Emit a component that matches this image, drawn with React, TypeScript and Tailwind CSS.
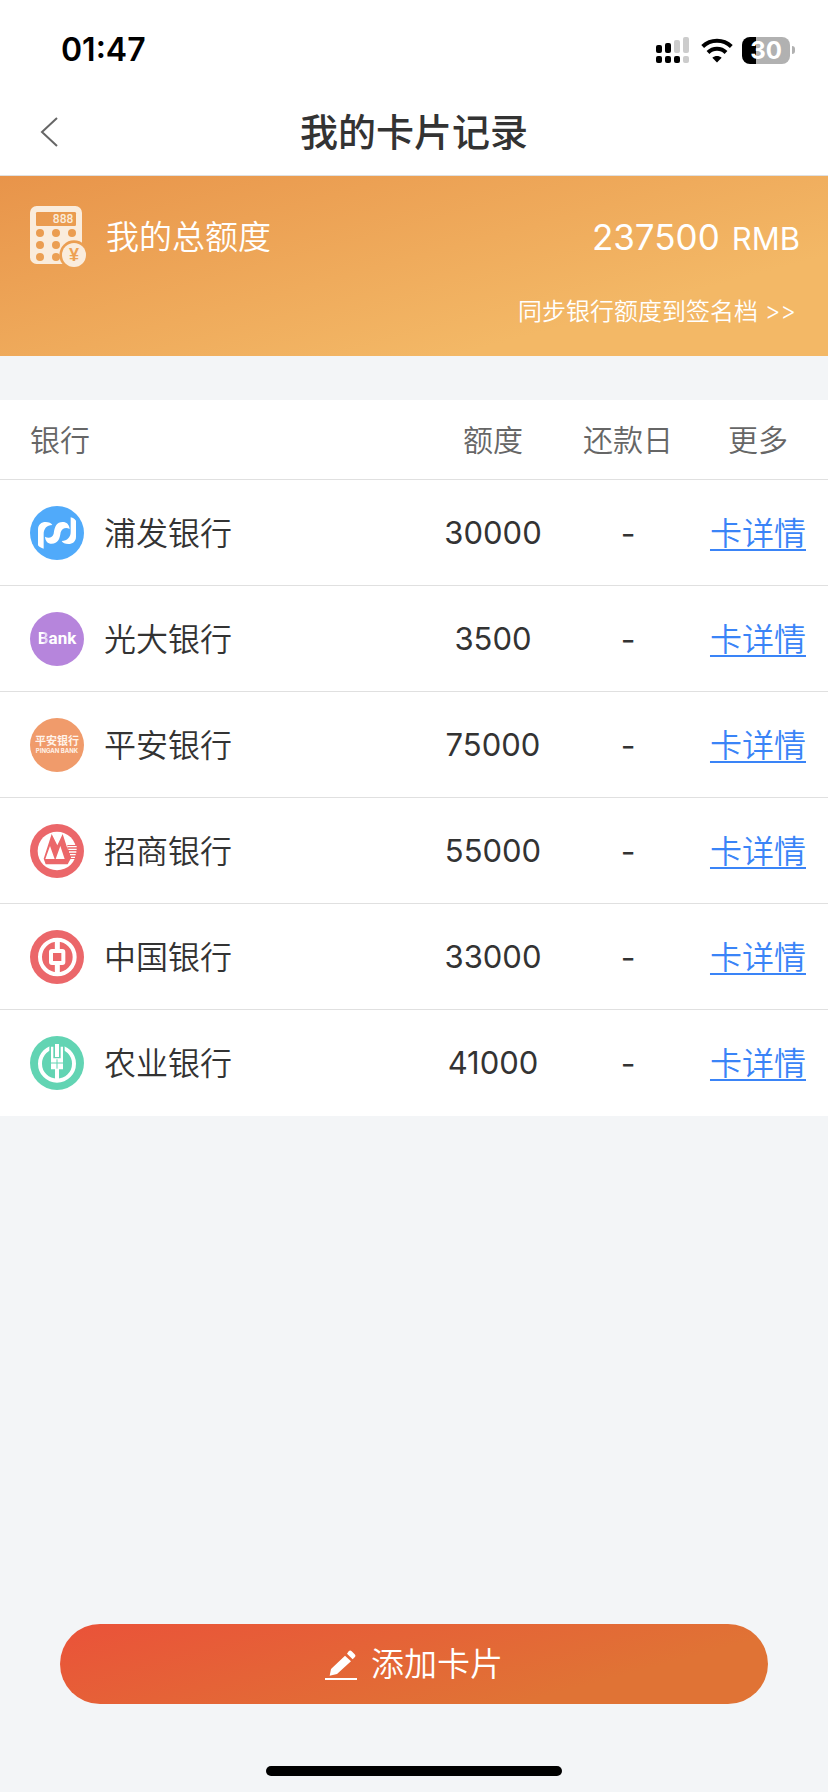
import { ReactNode } from "react";
import { twMerge } from "tailwind-merge";

interface Card {
    name: string;
    amount: number;
    payDay?: string;
    logo: ReactNode;
}

interface LogoProps {
    className: string;
    children: ReactNode;
}

function Logo({ className, children }: LogoProps) {
    return (
        <svg viewBox="0 0 162 162" className={twMerge("size-[54px] rounded-full shrink-0", className)} aria-hidden="true">
            {children}
        </svg>
    );
}

function SpdLogo() {
    return (
        <Logo className="bg-[#50aafa]">
            <g fill="#fff">
                <path d="M24 118V70c0-14 10-22 23-22 10 0 17 3 20 9-17 1-26 11-26 27v44c-8-2-13-5-17-10Z" />
                <path d="M45 92c10 6 23 3 26-9 3-22 9-35 27-35 12 0 20 8 21 21-10-6-23-3-27 10-3 21-8 34-27 34-12 0-19-8-20-21Z" />
                <path d="M138 44v48c0 14-10 22-23 22-10 0-17-3-20-9 17-1 27-11 27-27V34c8 2 12 5 16 10Z" />
            </g>
        </Logo>
    );
}

function EverbrightLogo() {
    return (
        <span className="flex size-[54px] shrink-0 items-center justify-center rounded-full bg-[#b685dc] font-[Roboto,sans-serif] text-[17px] leading-none font-bold text-white">
            <span className="bg-linear-to-r from-white from-40% to-white/40 bg-clip-text text-transparent">B</span>ank
        </span>
    );
}

function PinganLogo() {
    return (
        <span className="flex size-[54px] shrink-0 flex-col items-center justify-center rounded-full bg-[#f09b6b] font-bold whitespace-nowrap text-[#fff3ea]">
            <span className="text-[11px] leading-[12px]">平安银行</span>
            <span className="text-[6px] leading-[8px]">PINGAN BANK</span>
        </span>
    );
}

function MerchantsLogo() {
    return (
        <Logo className="bg-[#eb676a]">
            <circle cx="81" cy="81" r="58" fill="#fff" />
            <path fill="#eb676a" d="M112 63h32v42h-32z" />
            <path fill="#eb676a" d="M65 30 82 64 98 30l24 74-9 17H47l-6-17Z" />
            <path fill="#fff" d="M60 66 74 105H46ZM91 66l13 39H77ZM112 66h28v4h-28zM115 74h25v4h-25zM117 82h22v4h-22zM120 90h17v4h-17zM123 98h12v4h-12z" />
            <path stroke="#eb676a" strokeWidth="3" d="M44 107h74" />
        </Logo>
    );
}

function ChinaLogo() {
    return (
        <Logo className="bg-[#eb676a]">
            <g fill="none" stroke="#fff">
                <circle cx="82" cy="81" r="52" strokeWidth="12" />
                <rect x="63" y="63" width="37" height="36" rx="3" strokeWidth="12" />
                <path strokeWidth="15" d="M82 26v32M82 104v32" />
            </g>
        </Logo>
    );
}

function AgriculturalLogo() {
    return (
        <Logo className="bg-[#62d4b3]">
            <circle cx="81" cy="83" r="51" fill="none" stroke="#fff" strokeWidth="12" />
            <path fill="#62d4b3" d="M58 18h46v40H58z" />
            <path fill="#fff" d="M75 24h12v39H75zM63 32h7v35h22V32h7v68H63zM75 100h12v36H75z" />
            <path stroke="#62d4b3" strokeWidth="3" d="M62 81h38M81 70v28" />
        </Logo>
    );
}

const cards: Card[] = [
    { name: "浦发银行", amount: 30000, logo: <SpdLogo /> },
    { name: "光大银行", amount: 3500, logo: <EverbrightLogo /> },
    { name: "平安银行", amount: 75000, logo: <PinganLogo /> },
    { name: "招商银行", amount: 55000, logo: <MerchantsLogo /> },
    { name: "中国银行", amount: 33000, logo: <ChinaLogo /> },
    { name: "农业银行", amount: 41000, logo: <AgriculturalLogo /> },
];

function StatusBar() {
    return (
        <div className="flex h-[88px] items-center justify-between pt-3 pr-[33px] pl-[61px] text-black">
            <span className="text-[32px] leading-none font-semibold">01:47</span>
            <div className="flex items-center gap-3">
                <svg viewBox="0 0 33 27" className="h-[27px] w-[33px]" aria-hidden="true">
                    <rect x="0" y="8" width="6" height="8" rx="2" />
                    <rect x="9" y="6" width="6" height="10" rx="2" />
                    <rect x="18" y="3" width="6" height="13" rx="2" fill="#ccc" />
                    <rect x="27" y="0" width="6" height="16" rx="2" fill="#ccc" />
                    <rect x="0" y="19" width="6" height="7" rx="2" />
                    <rect x="9" y="19" width="6" height="7" rx="2" />
                    <rect x="18" y="19" width="6" height="7" rx="2" />
                    <rect x="27" y="19" width="6" height="7" rx="2" fill="#ccc" />
                </svg>
                <svg viewBox="0 0 96 74" className="h-[25px] w-8" aria-hidden="true">
                    <g fill="none" stroke="#000" strokeWidth="12">
                        <path d="M5 25C29 2 67 2 91 25" />
                        <path d="M21 43c15-15 39-15 54 0" />
                    </g>
                    <path d="M48 73 34 59c8-7 20-7 28 0Z" />
                </svg>
                <div className="-ml-[3px] flex items-center gap-[2px]">
                    <span className="flex h-[27px] w-12 items-center justify-center rounded-lg bg-linear-to-r from-black from-30% to-[#b1b1b1] to-30% text-[24px] leading-[27px] font-bold text-white">30</span>
                    <span className="h-2 w-[3px] rounded-r-full bg-[#b1b1b1]" />
                </div>
            </div>
        </div>
    );
}

function CalculatorIcon() {
    return (
        <svg viewBox="0 0 171 186" className="h-[62px] w-[57px] shrink-0" aria-hidden="true">
            <mask id="keys">
                <rect width="156" height="174" rx="20" fill="#fff" />
                <rect x="18" y="18" width="120" height="42" rx="4" fill="#000" />
                {[81, 117, 153].map(y => [30, 78, 126].map(x => (
                    <circle key={`${x}-${y}`} cx={x} cy={y} r="12" fill="#000" />
                )))}
                <circle cx="132" cy="147" r="44" fill="#000" />
            </mask>
            <rect width="156" height="174" fill="#faecdc" mask="url(#keys)" />
            <text x="130" y="52" textAnchor="end" fontSize="36" fontWeight="500" fill="#faecdc" fontFamily="Liberation Sans Narrow, Roboto, sans-serif">888</text>
            <circle cx="132" cy="147" r="36" fill="#faecdc" />
            <text x="132" y="165" textAnchor="middle" fontSize="54" fontWeight="700" fill="#eda153" fontFamily="Liberation Sans, sans-serif">¥</text>
        </svg>
    );
}

export default function App() {
    const total = cards.reduce((sum, card) => sum + card.amount, 0);

    return (
        <div className="flex min-h-screen flex-col bg-[#f3f5f7] font-[Inter,'Noto_Sans_CJK_SC',sans-serif] text-[#333]">
            <header className="bg-white">
                <StatusBar />
                <div className="grid h-[88px] grid-cols-[1fr_auto_1fr] items-center border-b border-[#e0e0e0] px-10">
                    <button type="button" aria-label="返回" className="w-fit cursor-pointer">
                        <svg viewBox="0 0 18 30" className="h-[30px] w-[18px]" fill="none" stroke="#666" strokeWidth="2" aria-hidden="true">
                            <path d="M17 1 2 15l15 14" />
                        </svg>
                    </button>
                    <h1 className="text-[38px] leading-none font-medium">我的卡片记录</h1>
                </div>
            </header>

            <section className="h-[180px] bg-[linear-gradient(165deg,#e8944a,#f3b866_75%)] pt-[30px] pr-7 pl-[30px] font-[350] text-white">
                <div className="flex items-center gap-[19px]">
                    <CalculatorIcon />
                    <h2 className="text-[33px] leading-none">我的总额度</h2>
                    <p className="ml-auto flex items-baseline gap-3 leading-none font-normal">
                        <span className="text-[35px]">{total}</span>
                        <span className="text-[31px]">RMB</span>
                    </p>
                </div>
                <a href="#sync" className="mt-7 ml-auto block w-fit pr-1 text-[24px] leading-8">
                    同步银行额度到签名档 &gt;&gt;
                </a>
            </section>

            <table className="mt-11 w-full table-fixed border-separate border-spacing-0 bg-white text-center">
                <thead>
                    <tr className="text-[30px] text-[#666] *:h-20 *:border-b *:border-[#e0e0e0] *:pt-[2px] *:font-[350]">
                        <th className="pl-[30px] text-left">银行</th>
                        <th className="w-[150px]">额度</th>
                        <th className="w-[120px]">还款日</th>
                        <th className="w-[140px]">更多</th>
                    </tr>
                </thead>
                <tbody>
                    {cards.map(card => (
                        <tr key={card.name} className="text-[32px] font-[350] *:h-[106px] *:border-b *:border-[#e0e0e0] last:*:border-transparent">
                            <td className="pl-[30px]">
                                <div className="flex items-center gap-5">
                                    {card.logo}
                                    <span className="pt-[2px]">{card.name}</span>
                                </div>
                            </td>
                            <td className="pt-[2px] text-[31px] font-normal">{card.amount}</td>
                            <td className="pt-[2px] font-normal">{card.payDay ?? "-"}</td>
                            <td className="pt-[2px]">
                                <a href="#detail" className="text-[#3a84f7] underline decoration-2 underline-offset-4">卡详情</a>
                            </td>
                        </tr>
                    ))}
                </tbody>
            </table>

            <footer className="mt-auto flex flex-col items-center px-[60px] pb-4">
                <button type="button" className="flex h-20 w-full cursor-pointer items-center justify-center gap-[14px] rounded-full bg-[linear-gradient(165deg,#ea5239,#e07335_75%)] pt-[2px] text-[33px] font-[350] text-white">
                    <svg viewBox="0 0 96 90" className="h-[30px] w-8" fill="#fff" aria-hidden="true">
                        <path d="M14 77 18 57 60 17 78 34 36 72ZM66 11l5-7c3-3 6-3 9 0l9 9c3 3 3 6 0 9l-6 6Z" />
                        <path d="M0 84h96v6H0z" />
                    </svg>
                    添加卡片
                </button>
                <div className="mt-[62px] h-[10px] w-[296px] rounded-full bg-black" />
            </footer>
        </div>
    );
}
